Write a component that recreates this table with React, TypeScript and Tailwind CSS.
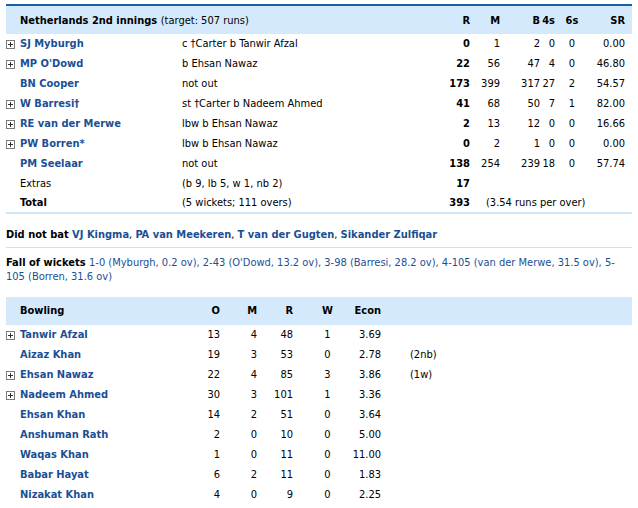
import React from "react";

const font = { fontFamily: '"DejaVu Sans Condensed", "DejaVu Sans", sans-serif' };

function PlusBox() {
  return (
    <svg width="9" height="9" viewBox="0 0 9 9" className="block">
      <rect x="0.5" y="0.5" width="8" height="8" fill="white" stroke="#7a7a7a" />
      <path d="M2 4.5H7M4.5 2V7" stroke="#333" strokeWidth="1" />
    </svg>
  );
}

const batting = [
  { name: "SJ Myburgh", plus: true, how: "c †Carter b Tanwir Afzal", r: "0", m: "1", b: "2", f: "0", s: "0", sr: "0.00" },
  { name: "MP O'Dowd", plus: true, how: "b Ehsan Nawaz", r: "22", m: "56", b: "47", f: "4", s: "0", sr: "46.80" },
  { name: "BN Cooper", plus: false, how: "not out", r: "173", m: "399", b: "317", f: "27", s: "2", sr: "54.57" },
  { name: "W Barresi†", plus: true, how: "st †Carter b Nadeem Ahmed", r: "41", m: "68", b: "50", f: "7", s: "1", sr: "82.00" },
  { name: "RE van der Merwe", plus: true, how: "lbw b Ehsan Nawaz", r: "2", m: "13", b: "12", f: "0", s: "0", sr: "16.66" },
  { name: "PW Borren*", plus: true, how: "lbw b Ehsan Nawaz", r: "0", m: "2", b: "1", f: "0", s: "0", sr: "0.00" },
  { name: "PM Seelaar", plus: false, how: "not out", r: "138", m: "254", b: "239", f: "18", s: "0", sr: "57.74" },
];

const bowling = [
  { name: "Tanwir Afzal", plus: true, o: "13", m: "4", r: "48", w: "1", e: "3.69", x: "" },
  { name: "Aizaz Khan", plus: false, o: "19", m: "3", r: "53", w: "0", e: "2.78", x: "(2nb)" },
  { name: "Ehsan Nawaz", plus: true, o: "22", m: "4", r: "85", w: "3", e: "3.86", x: "(1w)" },
  { name: "Nadeem Ahmed", plus: true, o: "30", m: "3", r: "101", w: "1", e: "3.36", x: "" },
  { name: "Ehsan Khan", plus: false, o: "14", m: "2", r: "51", w: "0", e: "3.64", x: "" },
  { name: "Anshuman Rath", plus: false, o: "2", m: "0", r: "10", w: "0", e: "5.00", x: "" },
  { name: "Waqas Khan", plus: false, o: "1", m: "0", r: "11", w: "0", e: "11.00", x: "" },
  { name: "Babar Hayat", plus: false, o: "6", m: "2", r: "11", w: "0", e: "1.83", x: "" },
  { name: "Nizakat Khan", plus: false, o: "4", m: "0", r: "9", w: "0", e: "2.25", x: "" },
];

// icon | name | dismissal | R | M | B | 4s | 6s | SR
const batCols = "grid grid-cols-[14px_162px_258px_30px_30px_40px_15px_34px_36px] items-center";
// icon | name | O | M | R | W | Econ | extras
const bowlCols = "grid grid-cols-[14px_170px_30px_37px_36px_53px_35px_1fr] items-center";

export default function App() {
  return (
    <div className="w-[638px] h-[508px] bg-white text-black text-[11px] px-[6px] pt-[4px]" style={font}>
      <div className={`${batCols} h-[30px] pt-[2px] bg-[#d4eafc] border-t-2 border-[#1a5ea8] font-bold`}>
        <div />
        <div className="col-span-2 whitespace-nowrap">
          Netherlands 2nd innings <span className="font-normal">(target: 507 runs)</span>
        </div>
        <div className="text-right">R</div>
        <div className="text-right">M</div>
        <div className="text-right">B</div>
        <div className="text-right">4s</div>
        <div className="text-center">6s</div>
        <div className="text-right">SR</div>
      </div>

      {batting.map((p) => (
        <div key={p.name} className={`${batCols} h-[20px]`}>
          <div>{p.plus && <PlusBox />}</div>
          <div className="font-bold text-[#1a4f95]">{p.name}</div>
          <div>{p.how}</div>
          <div className="text-right font-bold">{p.r}</div>
          <div className="text-right">{p.m}</div>
          <div className="text-right">{p.b}</div>
          <div className="text-right">{p.f}</div>
          <div className="text-center">{p.s}</div>
          <div className="text-right">{p.sr}</div>
        </div>
      ))}

      <div className={`${batCols} h-[20px]`}>
        <div />
        <div>Extras</div>
        <div>(b 9, lb 5, w 1, nb 2)</div>
        <div className="text-right font-bold">17</div>
      </div>
      <div className={`${batCols} h-[20px] border-b-2 border-[#cfe6f8]`}>
        <div />
        <div className="font-bold">Total</div>
        <div>(5 wickets; 111 overs)</div>
        <div className="text-right font-bold">393</div>
        <div className="col-span-5 pl-[16px] whitespace-nowrap">(3.54 runs per over)</div>
      </div>

      <div className="mt-[14px] leading-[14px]">
        <span className="font-bold">Did not bat </span>
        <span className="font-bold text-[#1a4f95]">VJ Kingma</span>,{" "}
        <span className="font-bold text-[#1a4f95]">PA van Meekeren</span>,{" "}
        <span className="font-bold text-[#1a4f95]">T van der Gugten</span>,{" "}
        <span className="font-bold text-[#1a4f95]">Sikander Zulfiqar</span>
      </div>

      <div className="mt-[5px] border-t border-[#dddddd] pt-[8px] leading-[14px]">
        <span className="font-bold">Fall of wickets </span>
        <span className="text-[#1a4f95]">
          1-0 (Myburgh, 0.2 ov), 2-43 (O'Dowd, 13.2 ov), 3-98 (Barresi, 28.2 ov), 4-105 (van der Merwe, 31.5 ov), 5-105 (Borren, 31.6 ov)
        </span>
      </div>

      <div className={`${bowlCols} mt-[13px] h-[28px] bg-[#d4eafc] font-bold`}>
        <div />
        <div>Bowling</div>
        <div className="text-right">O</div>
        <div className="text-right">M</div>
        <div className="text-right">R</div>
        <div className="text-center pl-[16px]">W</div>
        <div className="text-right">Econ</div>
        <div />
      </div>
      {bowling.map((b) => (
        <div key={b.name} className={`${bowlCols} h-[20px]`}>
          <div>{b.plus && <PlusBox />}</div>
          <div className="font-bold text-[#1a4f95]">{b.name}</div>
          <div className="text-right">{b.o}</div>
          <div className="text-right">{b.m}</div>
          <div className="text-right">{b.r}</div>
          <div className="text-center pl-[16px]">{b.w}</div>
          <div className="text-right">{b.e}</div>
          <div className="pl-[29px]">{b.x}</div>
        </div>
      ))}
    </div>
  );
}
